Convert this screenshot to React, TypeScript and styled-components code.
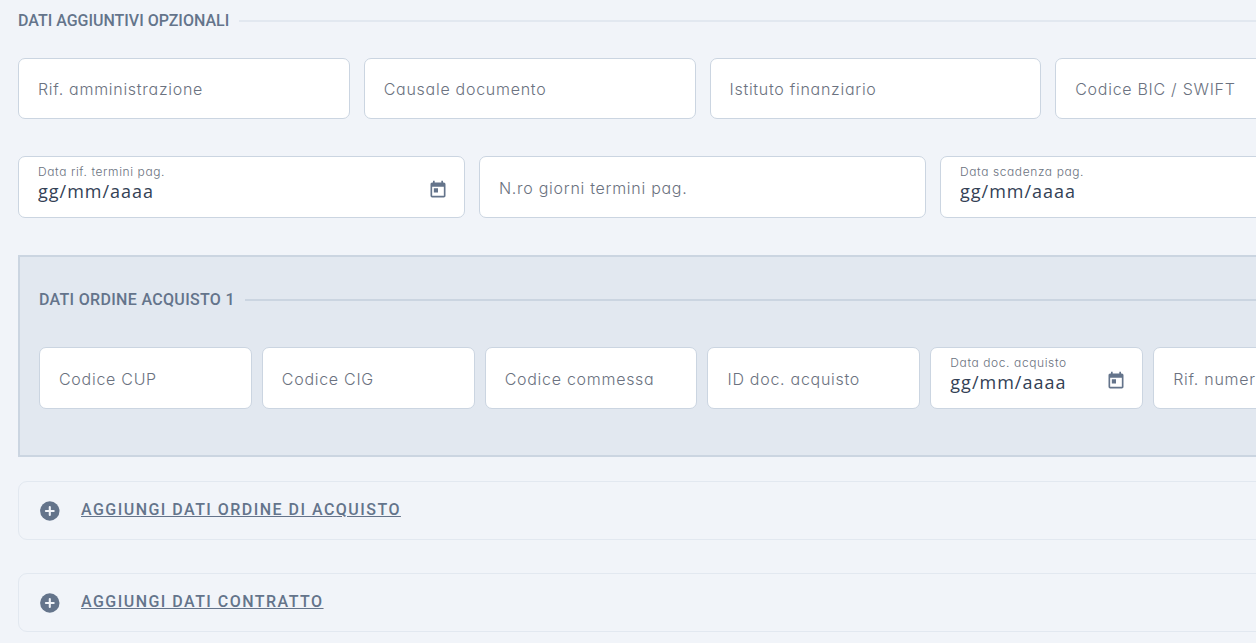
import React, { useId } from "react";
import styled, { createGlobalStyle } from "styled-components";
import { MdToday } from "react-icons/md";

const GlobalStyle = createGlobalStyle`
  *, *::before, *::after { box-sizing: border-box; }
  html { scrollbar-width: none; }
  body {
    margin: 0;
    background: #f1f4f9;
    color: #64748b;
    font-family: Inter, "Liberation Sans", sans-serif;
    -webkit-font-smoothing: antialiased;
  }
`;

const Form = styled.form`
  min-width: 1405px;
  padding: 9px 18px 11px;
  display: flex;
  flex-direction: column;
`;

const Heading = styled.h2<{ $strong?: boolean }>`
  margin: 0;
  display: flex;
  align-items: center;
  gap: 10px;
  font: 500 16px/24px Roboto, sans-serif;
  letter-spacing: ${(p) => (p.$strong ? "0.02em" : "normal")};
  color: #64748b;
  white-space: nowrap;

  &::after {
    content: "";
    flex: 1;
    height: 2px;
    background: ${(p) => (p.$strong ? "#cbd5e1" : "#e2e8f0")};
  }
`;

const Row = styled.div<{ $columns: number; $gap: number; $top: number; $height?: number }>`
  display: grid;
  grid-template-columns: repeat(${(p) => p.$columns}, minmax(0, 1fr));
  grid-auto-rows: ${(p) => p.$height ?? 62}px;
  gap: ${(p) => p.$gap}px;
  margin-top: ${(p) => p.$top}px;
`;

const FieldBox = styled.div`
  display: grid;
  grid-template-columns: minmax(0, 1fr) auto;
  padding: 0 16px 0 19px;
  border: 1px solid #cbd5e1;
  border-radius: 7px;
  background: #fff;
`;

const FieldLabel = styled.label<{ $small?: boolean }>`
  grid-area: 1 / 1;
  align-self: ${(p) => (p.$small ? "start" : "center")};
  padding-top: ${(p) => (p.$small ? 7 : 1)}px;
  pointer-events: none;
  color: #6b7280;
  font-size: ${(p) => (p.$small ? 12 : 16)}px;
  font-weight: 300;
  line-height: ${(p) => (p.$small ? 16 : 24)}px;
  letter-spacing: ${(p) => (p.$small ? "0.05em" : "0.045em")};
  font-feature-settings: "cv11";
  white-space: nowrap;
  z-index: 1;
`;

const TextInput = styled.input<{ $date?: boolean }>`
  grid-area: 1 / 1;
  width: 100%;
  min-width: 0;
  padding: ${(p) => (p.$date ? "8px 0 0" : "0")};
  border: 0;
  outline: 0;
  background: transparent;
  color: #334155;
  font: 400 18px/24px "Open Sans", sans-serif;
  letter-spacing: 1px;

  &::placeholder {
    color: #334155;
    opacity: 1;
  }
`;

const PickerButton = styled.button`
  grid-area: 1 / 2;
  align-self: center;
  display: flex;
  margin-top: 6px;
  padding: 0;
  border: 0;
  background: none;
  color: #64748b;
  cursor: pointer;
`;

const OrderPanel = styled.section`
  margin-top: 37px;
  padding: 31px 19px 46px;
  border: 2px solid #cbd5e1;
  background: #e2e8f0;
`;

const AddList = styled.div`
  display: grid;
  gap: 33px;
  margin-top: 24px;
`;

const AddBox = styled.div`
  height: 59px;
  display: flex;
  align-items: center;
  padding: 0 19px;
  border: 1px solid #e2e8f0;
  border-radius: 9px;
`;

const AddButton = styled.button`
  display: flex;
  align-items: center;
  gap: 19px;
  padding: 0;
  border: 0;
  background: none;
  color: #64748b;
  font: 500 16px/24px Roboto, sans-serif;
  letter-spacing: 0.092em;
  cursor: pointer;
`;

const AddText = styled.span`
  padding-bottom: 2px;
  text-decoration: underline;
`;

function PlusCircle() {
  return (
    <svg width="24" height="24" viewBox="0 0 24 24" aria-hidden="true">
      <circle cx="11.8" cy="12" r="9.7" fill="currentColor" />
      <path d="M11.8 8.1v7.8M7.9 12h7.8" stroke="#f1f4f9" strokeWidth="2.1" strokeLinecap="round" />
    </svg>
  );
}

function Field({ label, date = false }: { label: string; date?: boolean }) {
  const id = useId();
  return (
    <FieldBox>
      <FieldLabel htmlFor={id} $small={date}>{label}</FieldLabel>
      <TextInput id={id} type="text" $date={date} placeholder={date ? "gg/mm/aaaa" : undefined} />
      {date && (
        <PickerButton type="button" aria-label={`Apri calendario: ${label}`}>
          <MdToday size={20} />
        </PickerButton>
      )}
    </FieldBox>
  );
}

function AddSection({ text }: { text: string }) {
  return (
    <AddBox>
      <AddButton type="button">
        <PlusCircle />
        <AddText>{text}</AddText>
      </AddButton>
    </AddBox>
  );
}

export default function App() {
  return (
    <>
      <GlobalStyle />
      <Form>
        <Heading>DATI AGGIUNTIVI OPZIONALI</Heading>
        <Row $columns={4} $gap={14} $top={25} $height={61}>
          <Field label="Rif. amministrazione" />
          <Field label="Causale documento" />
          <Field label="Istituto finanziario" />
          <Field label="Codice BIC / SWIFT" />
        </Row>
        <Row $columns={3} $gap={14} $top={37}>
          <Field label="Data rif. termini pag." date />
          <Field label="N.ro giorni termini pag." />
          <Field label="Data scadenza pag." date />
        </Row>
        <OrderPanel>
          <Heading $strong>DATI ORDINE ACQUISTO 1</Heading>
          <Row $columns={6} $gap={10} $top={35}>
            <Field label="Codice CUP" />
            <Field label="Codice CIG" />
            <Field label="Codice commessa" />
            <Field label="ID doc. acquisto" />
            <Field label="Data doc. acquisto" date />
            <Field label="Rif. numerico" />
          </Row>
        </OrderPanel>
        <AddList>
          <AddSection text="AGGIUNGI DATI ORDINE DI ACQUISTO" />
          <AddSection text="AGGIUNGI DATI CONTRATTO" />
        </AddList>
      </Form>
    </>
  );
}
